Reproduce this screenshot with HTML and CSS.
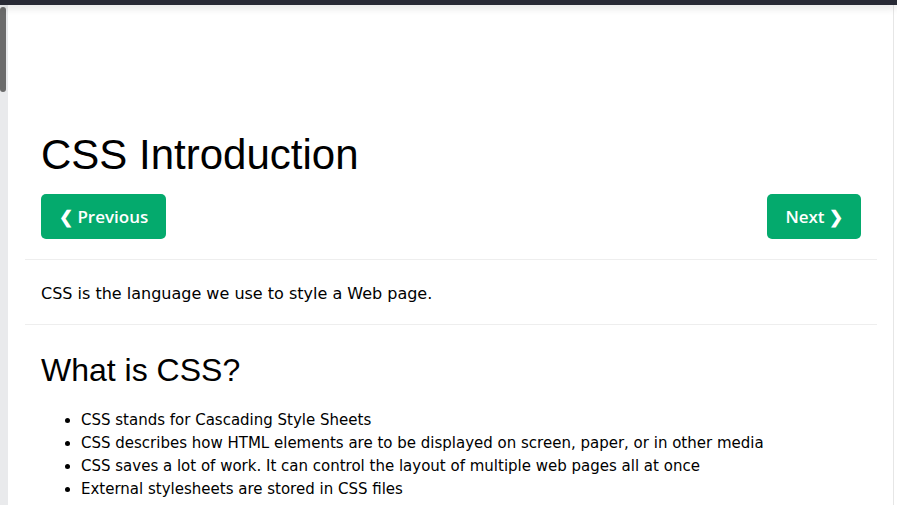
FILE: index.html
```html
<!DOCTYPE html>
<html>
<head>
<meta charset="utf-8">
<link rel="stylesheet" href="styles.css">
</head>
<body>
<div class="topbar"></div>
<div class="page">
  <div class="scroll"><div class="thumb"></div></div>
  <div class="main">
    <div class="content">
      <h1 class="title">CSS Introduction</h1>
      <div class="nav">
        <a class="btn" href="#">&#10094; Previous</a>
        <a class="btn" href="#">Next &#10095;</a>
      </div>
    </div>
    <hr class="rule rule-top">
    <div class="content">
      <p class="intro">CSS is the language we use to style a Web page.</p>
    </div>
    <hr class="rule">
    <div class="content">
      <h2 class="sub">What is CSS?</h2>
      <ul class="list">
        <li>CSS stands for Cascading Style Sheets</li>
        <li>CSS describes how HTML elements are to be displayed on screen, paper, or in other media</li>
        <li>CSS saves a lot of work. It can control the layout of multiple web pages all at once</li>
        <li>External stylesheets are stored in CSS files</li>
      </ul>
    </div>
  </div>
</div>
</body>
</html>
```
FILE: styles.css
```css
html, body {
  margin: 0;
  padding: 0;
  background: #fff;
  overflow: hidden;
}
body {
  font-family: "DejaVu Sans", Verdana, sans-serif;
  font-size: 15px;
  line-height: 1.5;
  color: #000;
  height: 505px;
}
.topbar {
  height: 5px;
  background: #282a35;
  box-shadow: 0 2px 8px rgba(0, 0, 0, 0.16);
  position: relative;
  z-index: 2;
}
.page {
  display: flex;
  height: 500px;
}
.scroll {
  width: 8px;
  flex: none;
  background: #e9eaec;
  padding-top: 2px;
  box-sizing: border-box;
}
.thumb {
  width: 6px;
  height: 85px;
  margin-left: 0;
  background: #6b6b6b;
  border-radius: 3px;
}
.main {
  flex: 1;
  margin-right: 3px;
  border-right: 1px solid #e6e6e6;
  padding: 125px 16px 0 17px;
}
.content {
  padding: 0 16px;
}
.title {
  font-family: "Liberation Sans", Arial, sans-serif;
  font-weight: normal;
  font-size: 42px;
  line-height: 50px;
  margin: 0;
}
.nav {
  display: flex;
  justify-content: space-between;
  margin-top: 14px;
}
.btn {
  display: inline-block;
  background: #04aa6d;
  color: #fff;
  text-decoration: none;
  font-family: "Open Sans", sans-serif;
  font-weight: 600;
  font-size: 17px;
  line-height: 25px;
  padding: 10px 18px;
  border-radius: 5px;
}
.rule {
  border: 0;
  border-top: 1px solid #eeeeee;
  margin: 0;
}
.rule-top {
  margin-top: 20px;
}
.intro {
  font-size: 16px;
  line-height: 24px;
  margin: 22px 0 18px;
}
.sub {
  font-family: "Liberation Sans", Arial, sans-serif;
  font-weight: normal;
  font-size: 32px;
  line-height: 38px;
  margin: 26px 0 0;
}
.list {
  margin: 20px 0 0;
  padding-left: 40px;
  line-height: 23px;
}
```
